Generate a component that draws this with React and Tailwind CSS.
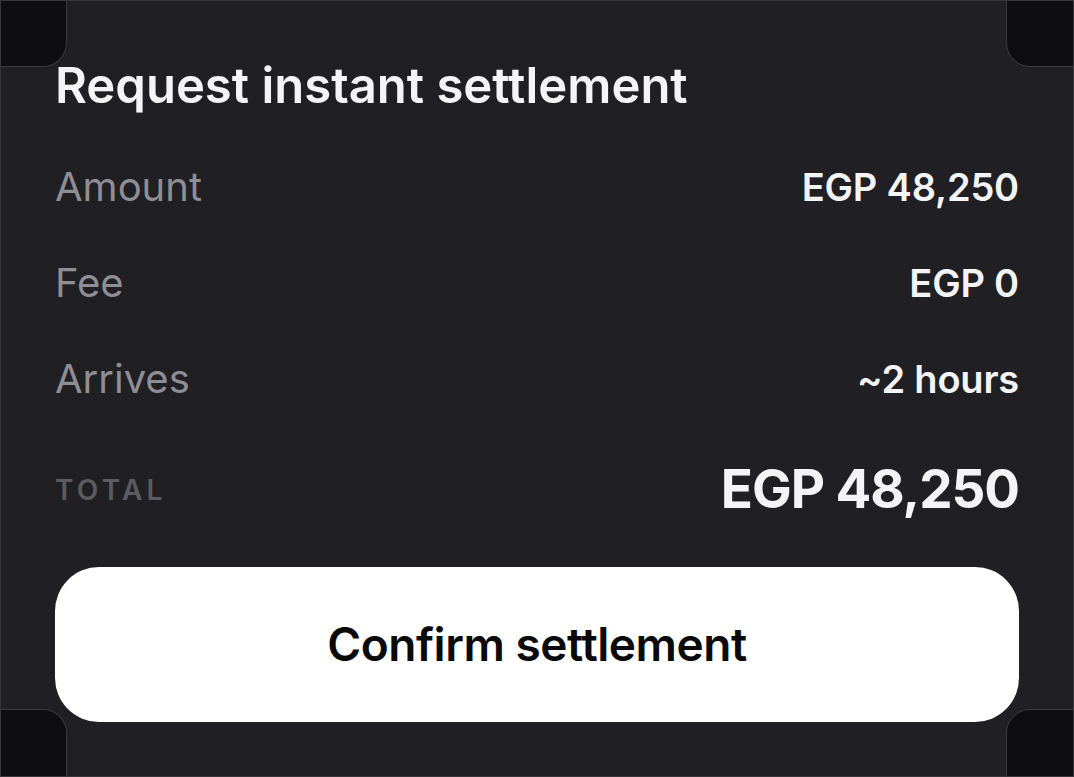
export default function App() {
  const rows = [
    { label: "Amount", value: "EGP 48,250" },
    { label: "Fee", value: "EGP 0" },
    { label: "Arrives", value: "~2 hours" },
  ];

  return (
    <div
      className="relative w-full h-[777px] overflow-hidden bg-[#1f1f24] border border-[#36363b]"
      style={{ fontFamily: "Inter, 'Noto Sans', sans-serif" }}
    >
      {/* corner notches */}
      <div className="absolute left-[-1px] top-[-1px] w-[67px] h-[67px] bg-[#0e0e10] border-r border-b border-[#3a3a3f] rounded-br-[24px]" />
      <div className="absolute right-[-1px] top-[-1px] w-[68px] h-[67px] bg-[#0e0e10] border-l border-b border-[#3a3a3f] rounded-bl-[24px]" />
      <div className="absolute left-[-1px] bottom-[-1px] w-[67px] h-[68px] bg-[#0e0e10] border-r border-t border-[#3a3a3f] rounded-tr-[24px]" />
      <div className="absolute right-[-1px] bottom-[-1px] w-[68px] h-[68px] bg-[#0e0e10] border-l border-t border-[#3a3a3f] rounded-tl-[24px]" />

      <div className="relative flex flex-col px-[54px] pt-[55px]">
        <h1 className="text-[49px] leading-[60px] font-semibold text-[#f4f4f6]">
          Request instant settlement
        </h1>

        <div className="mt-[23px] flex flex-col">
          {rows.map((r) => (
            <div key={r.label} className="h-[96px] flex items-center justify-between">
              <span className="text-[40px] text-[#8e8e94]">{r.label}</span>
              <span className="text-[38px] font-semibold text-[#f4f4f6] tracking-[-0.005em]">{r.value}</span>
            </div>
          ))}
        </div>

        <div className="mt-[15px] h-[96px] flex items-center justify-between">
          <span className="text-[28px] font-semibold tracking-[0.15em] text-[#5b5b61]">TOTAL</span>
          <span className="text-[53px] font-bold text-[#f4f4f6] tracking-[-0.02em]">EGP 48,250</span>
        </div>

        <button className="mt-[29px] h-[155px] w-full rounded-[44px] bg-white text-[#0a0a0a] text-[46px] font-semibold tracking-[-0.01em]">
          Confirm settlement
        </button>
      </div>
    </div>
  );
}
